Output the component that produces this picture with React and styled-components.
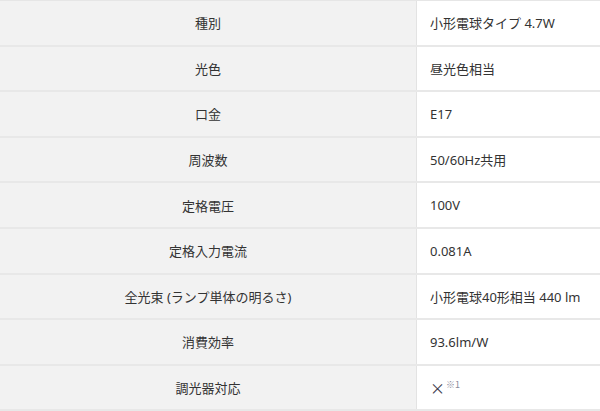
import React from 'react';
import styled, { createGlobalStyle } from 'styled-components';

const GlobalStyle = createGlobalStyle`
  html, body {
    margin: 0;
    padding: 0;
    background: #fff;
  }
  body {
    font-family: "Noto Sans", "Noto Sans CJK JP", sans-serif;
    color: #333;
  }
`;

const Table = styled.div`
  width: 600px;
  border-top: 1px solid #e6e6e6;
`;

const Row = styled.div`
  display: grid;
  grid-template-columns: 417px 1fr;
  height: 45.6px;
  box-sizing: border-box;
  border-bottom: 2px solid #e8e8e8;
`;

const Head = styled.div`
  display: flex;
  align-items: center;
  justify-content: center;
  background: #f2f2f2;
  border-right: 1px solid #e3e3e3;
  font-size: 13px;
`;

const Cell = styled.div`
  display: flex;
  align-items: center;
  padding-left: 13px;
  font-size: 13px;
`;

const Cross = styled.span`
  font-family: "Noto Sans CJK JP", sans-serif;
  font-size: 15px;
  font-weight: 400;
  color: #3a3a4a;
`;

const Note = styled.sup`
  font-family: "Noto Sans CJK JP", sans-serif;
  font-size: 9px;
  color: #8a8a9a;
  margin-left: 1px;
  position: relative;
  top: -3px;
`;

const rows = [
  ['種別', '小形電球タイプ 4.7W'],
  ['光色', '昼光色相当'],
  ['口金', 'E17'],
  ['周波数', '50/60Hz共用'],
  ['定格電圧', '100V'],
  ['定格入力電流', '0.081A'],
  ['全光束 (ランプ単体の明るさ)', '小形電球40形相当 440 lm'],
  ['消費効率', '93.6lm/W'],
  ['調光器対応', 'note'],
];

export default function App() {
  return (
    <>
      <GlobalStyle />
      <Table>
        {rows.map(([k, v], i) => (
          <Row key={i}>
            <Head>{k}</Head>
            <Cell>{v === 'note' ? <><Cross>×</Cross><Note>※1</Note></> : v}</Cell>
          </Row>
        ))}
      </Table>
    </>
  );
}
